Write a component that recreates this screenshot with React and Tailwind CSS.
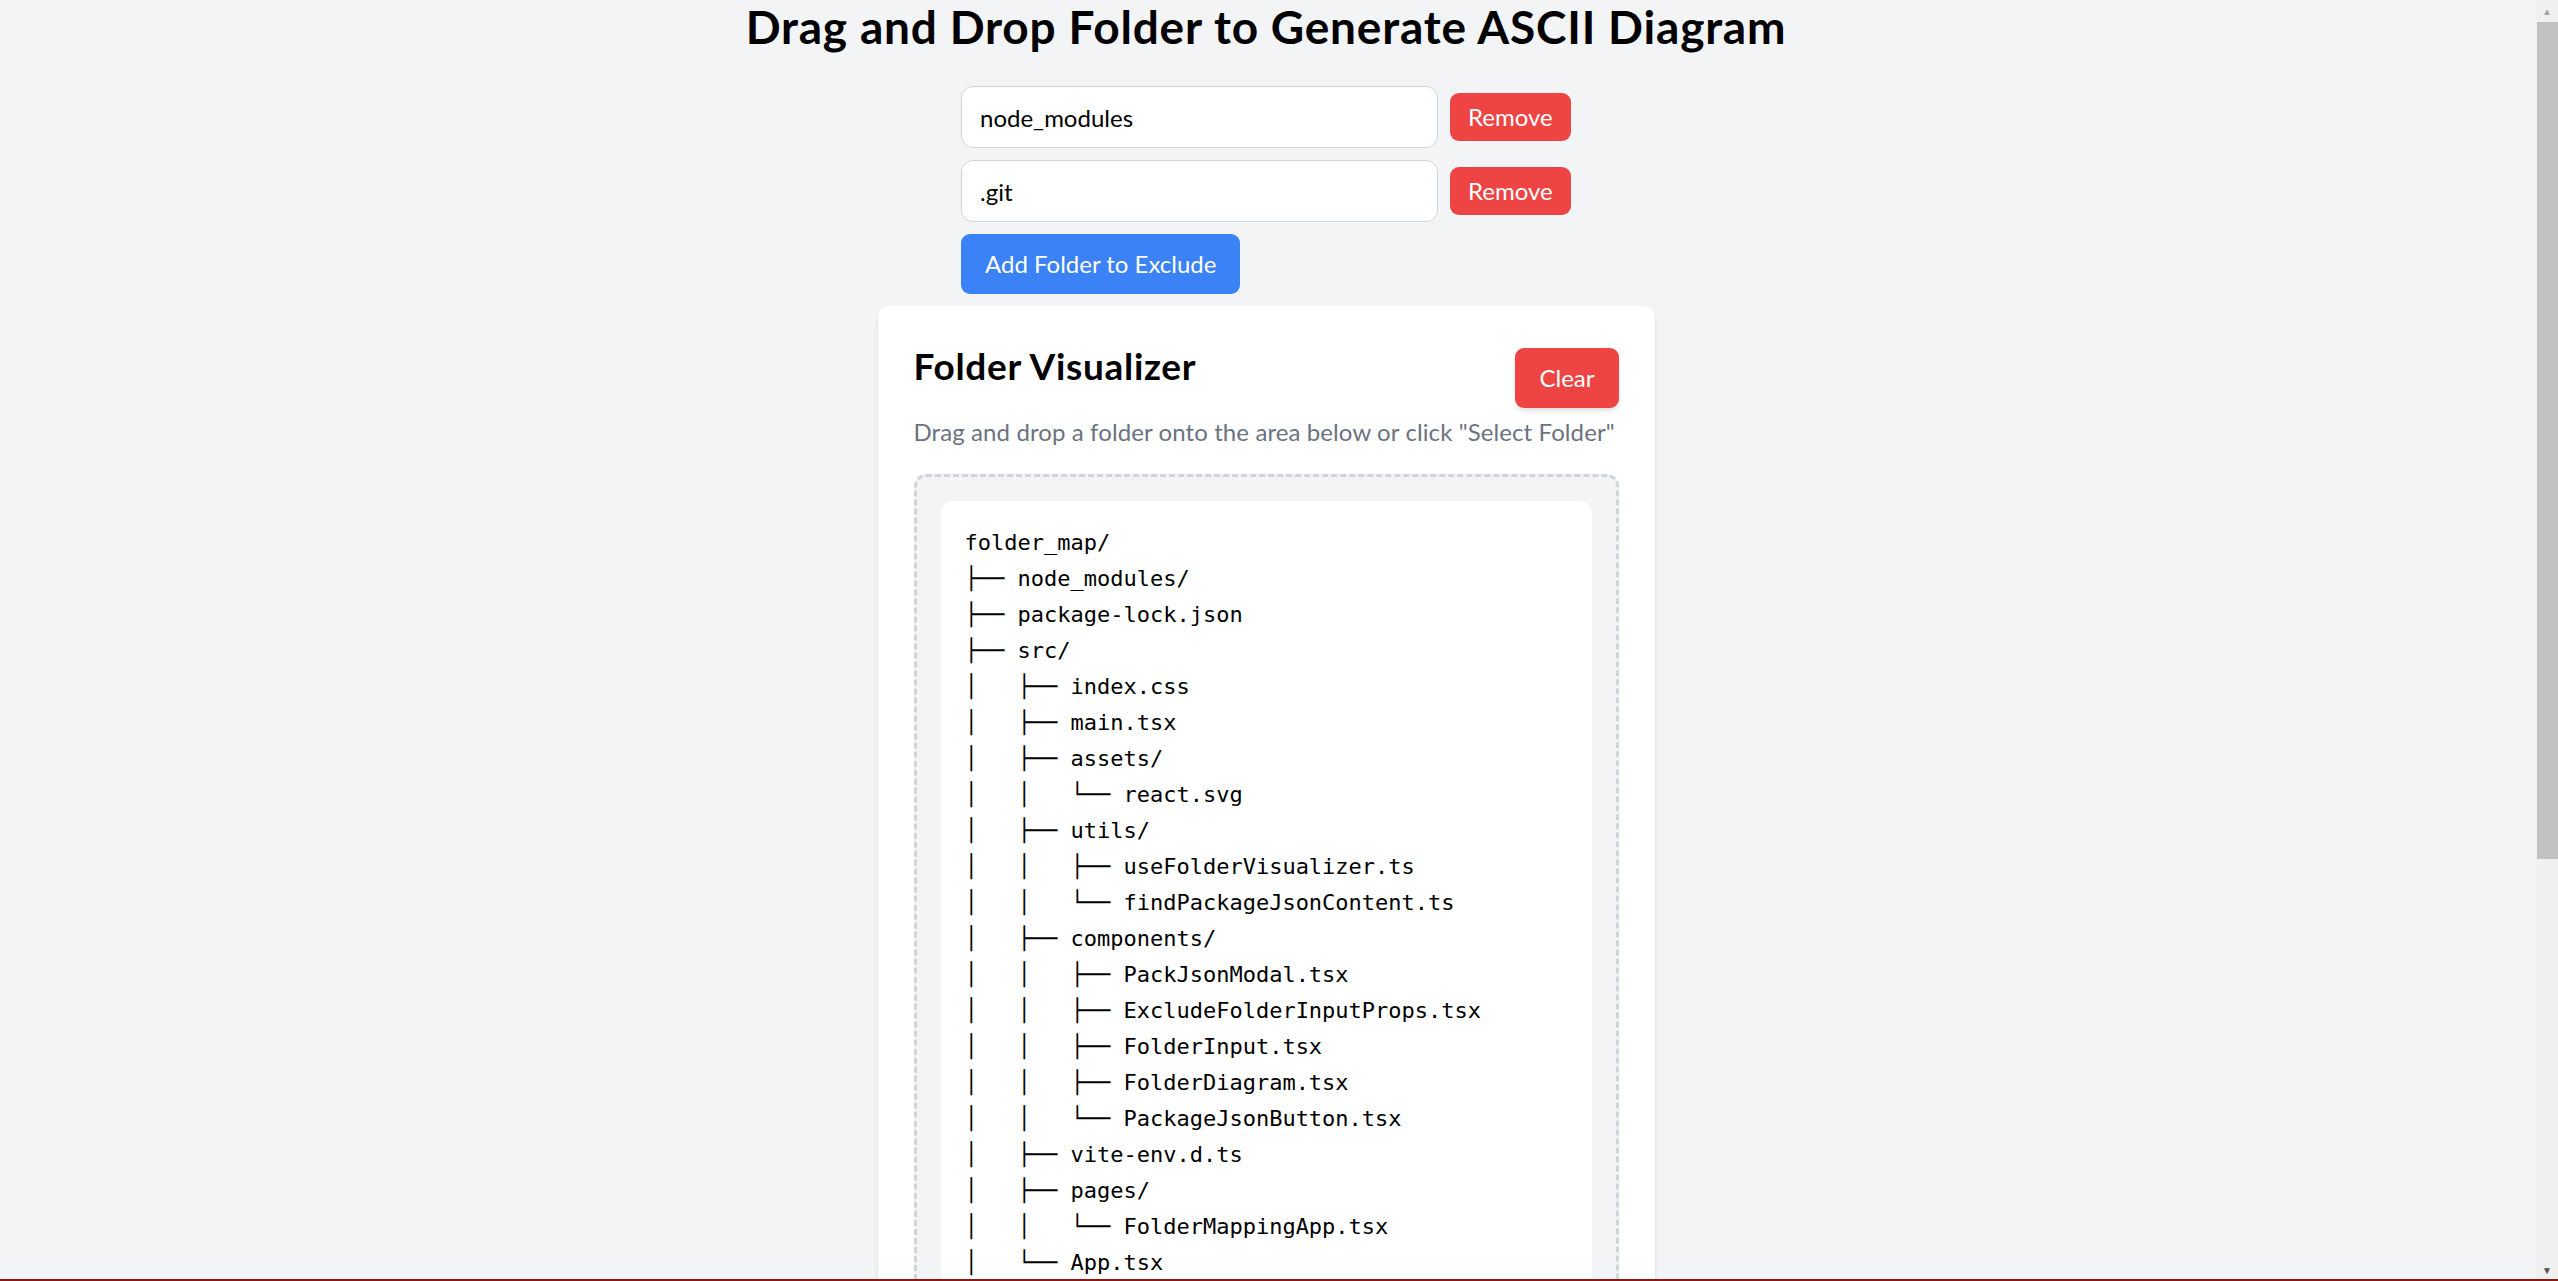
import { useState } from 'react';

const tree = `folder_map/
├── node_modules/
├── package-lock.json
├── src/
│   ├── index.css
│   ├── main.tsx
│   ├── assets/
│   │   └── react.svg
│   ├── utils/
│   │   ├── useFolderVisualizer.ts
│   │   └── findPackageJsonContent.ts
│   ├── components/
│   │   ├── PackJsonModal.tsx
│   │   ├── ExcludeFolderInputProps.tsx
│   │   ├── FolderInput.tsx
│   │   ├── FolderDiagram.tsx
│   │   └── PackageJsonButton.tsx
│   ├── vite-env.d.ts
│   ├── pages/
│   │   └── FolderMappingApp.tsx
│   └── App.tsx
├── public/
│   └── vite.svg
├── .gitignore
├── eslint.config.js
├── index.html
├── package.json
├── postcss.config.js
├── README.md
├── tailwind.config.js
├── tsconfig.app.json
├── tsconfig.json
├── tsconfig.node.json
└── vite.config.ts`;

function ExcludeRow({ value, onChange, onRemove }) {
  return (
    <div className="flex items-center mb-[12px]">
      <input
        type="text"
        value={value}
        onChange={(e) => onChange(e.target.value)}
        className="w-[477px] h-[62px] px-[18px] border border-[#d1d5db] rounded-[12px] bg-white text-[24px] text-black focus:outline-none"
      />
      <button
        onClick={onRemove}
        className="ml-[12px] h-[48px] px-[18px] bg-[#ef4444] text-white text-[24px] rounded-[9px]"
      >
        Remove
      </button>
    </div>
  );
}

export default function App() {
  const [folders, setFolders] = useState(['node_modules', '.git']);

  const update = (i, v) => setFolders(folders.map((f, j) => (j === i ? v : f)));
  const remove = (i) => setFolders(folders.filter((_, j) => j !== i));

  return (
    <div className="min-h-screen bg-[#f3f4f6] flex flex-col items-center pb-[36px] pr-[26px] font-['Lato',sans-serif]">
      <h1 className="text-[46px] leading-[54px] font-bold tracking-[0.8px] text-black">
        Drag and Drop Folder to Generate ASCII Diagram
      </h1>

      <div className="mt-[32px] w-[610px]">
        {folders.map((f, i) => (
          <ExcludeRow key={i} value={f} onChange={(v) => update(i, v)} onRemove={() => remove(i)} />
        ))}
        <button
          onClick={() => setFolders([...folders, ''])}
          className="mb-[12px] h-[60px] px-[24px] bg-[#3b82f6] text-white text-[24px] rounded-[9px]"
        >
          Add Folder to Exclude
        </button>
      </div>

      <div className="w-[777px] bg-white rounded-[12px] shadow-md px-[36px] pt-[36px] pb-[36px]">
        <div className="flex justify-between items-center">
          <h2 className="text-[37px] leading-[48px] font-bold tracking-[0.7px] text-black mb-[24px]">Folder Visualizer</h2>
          <button className="h-[60px] px-[24px] bg-[#ef4444] text-white text-[24px] rounded-[9px] shadow-md">
            Clear
          </button>
        </div>
        <p className="text-[24px] leading-[36px] tracking-[0.1px] text-[#6b7280] mb-[24px] whitespace-nowrap">
          Drag and drop a folder onto the area below or click "Select Folder"
        </p>
        <div className="border-[3px] border-dashed border-[#d1d5db] rounded-[12px] bg-[#f3f4f6] p-[24px]">
          <div className="bg-white rounded-[12px] p-[24px]">
            <pre className="font-['DejaVu_Sans_Mono',monospace] text-[22px] leading-[36px] text-black whitespace-pre">
              {tree}
            </pre>
          </div>
        </div>
      </div>

      <div className="fixed top-0 right-0 bottom-0 w-[22px] bg-[#f0f0f0] flex flex-col items-center">
        <div className="h-[22px] flex items-center justify-center text-[10px] leading-none text-[#a3a3a3]">▲</div>
        <div className="w-[21px] h-[837px] bg-[#c1c1c1]" />
        <div className="flex-1" />
        <div className="h-[22px] flex items-center justify-center text-[10px] leading-none text-[#505050]">▼</div>
      </div>
      <div className="fixed bottom-0 left-0 right-0 h-[2px] bg-[#8b1a16]" />
    </div>
  );
}
